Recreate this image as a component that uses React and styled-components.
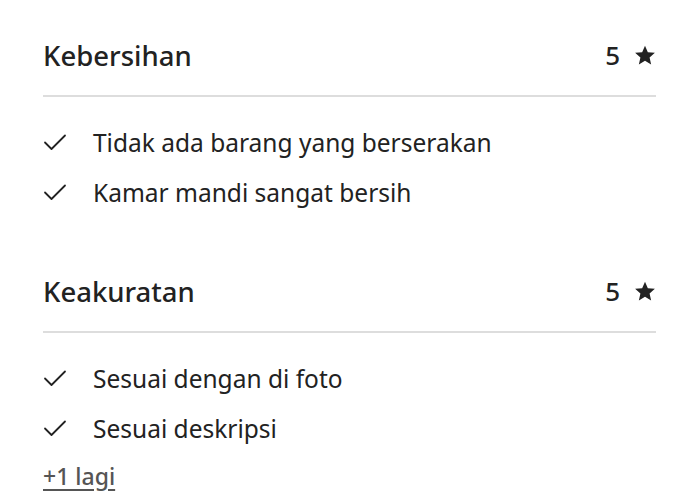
import React from "react";
import styled, { createGlobalStyle } from "styled-components";

const Global = createGlobalStyle`
  html, body { margin: 0; padding: 0; background: #fff; }
  body { font-family: "Noto Sans", "Liberation Sans", sans-serif; color: #222; }
`;

const Page = styled.div`
  width: 700px;
  height: 500px;
  box-sizing: border-box;
  padding: 30px 44px 0 43px;
  display: flex;
  flex-direction: column;
  gap: 49px;
  overflow: hidden;
`;

const Section = styled.section`
  display: flex;
  flex-direction: column;
`;

const Header = styled.div`
  height: 50px;
  display: flex;
  align-items: center;
  justify-content: space-between;
  border-bottom: 2px solid #dddddd;
  padding-bottom: 15px;
  box-sizing: content-box;
`;

const Title = styled.h2`
  margin: 0;
  font-size: 27.5px;
  font-weight: 500;
  color: #222;
`;

const Score = styled.div`
  display: flex;
  align-items: center;
  gap: 14px;
  font-size: 26px;
  font-weight: 500;
`;

const List = styled.ul`
  list-style: none;
  margin: 20px 0 0;
  padding: 0;
`;

const Item = styled.li`
  height: 50px;
  display: flex;
  align-items: center;
  gap: 26px;
  font-size: 24.5px;
  color: #222;
`;

const More = styled.a`
  display: inline-block;
  margin-top: 7px;
  font-size: 23px;
  font-weight: 500;
  color: #555;
  text-decoration: underline;
  text-underline-offset: 4px;
`;

const Check = () => (
  <svg width="24" height="24" viewBox="0 0 24 24" fill="none" stroke="#222" strokeWidth="1.8" strokeLinecap="round" strokeLinejoin="round">
    <path d="M2 12.5l6.5 6.5L22 5.5" />
  </svg>
);

const Star = () => (
  <svg width="22" height="22" viewBox="0 0 24 24" fill="#222">
    <path d="M12 1.8l3.1 7.1 7.7.7-5.8 5.1 1.7 7.6L12 18.3l-6.7 4 1.7-7.6-5.8-5.1 7.7-.7z" />
  </svg>
);

const data = [
  { title: "Kebersihan", score: 5, items: ["Tidak ada barang yang berserakan", "Kamar mandi sangat bersih"] },
  { title: "Keakuratan", score: 5, items: ["Sesuai dengan di foto", "Sesuai deskripsi"], more: "+1 lagi" },
];

export default function App() {
  return (
    <>
      <Global />
      <Page>
        {data.map((s) => (
          <Section key={s.title}>
            <Header>
              <Title>{s.title}</Title>
              <Score>
                {s.score}
                <Star />
              </Score>
            </Header>
            <List>
              {s.items.map((t) => (
                <Item key={t}>
                  <Check />
                  {t}
                </Item>
              ))}
            </List>
            {s.more && <div><More href="#">{s.more}</More></div>}
          </Section>
        ))}
      </Page>
    </>
  );
}
